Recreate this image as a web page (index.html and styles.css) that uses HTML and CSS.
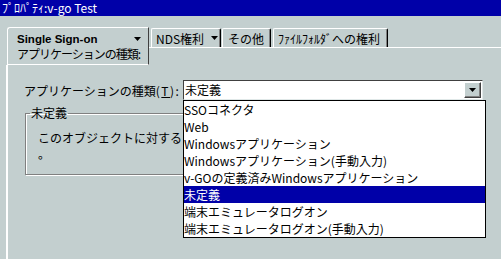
FILE: index.html
```html
<!DOCTYPE html>
<html lang="ja">
<head>
    <meta charset="UTF-8">
    <title>ﾌﾟﾛﾊﾟﾃｨ:v-go Test</title>
    <link rel="stylesheet" href="styles.css">
</head>
<body>
    <div class="titlebar">ﾌﾟﾛﾊﾟﾃｨ:v-go Test</div>

    <!-- Tabs -->
    <div class="tabstrip">
        <div class="tab-active">
            <div class="tab-head">
                <span class="tab-title">Single Sign-on</span>
                <svg class="arrow" width="7" height="4" viewBox="0 0 7 4"><polygon points="0,0 7,0 3.5,4" fill="#000"/></svg>
            </div>
            <div class="tab-sub">アプリケーションの種類:</div>
        </div>
        <div class="tab-row">
            <div class="tab tab-nds">NDS権利
                <svg class="arrow" width="7" height="4" viewBox="0 0 7 4"><polygon points="0,0 7,0 3.5,4" fill="#000"/></svg>
            </div>
            <div class="tab tab-other">その他</div>
            <div class="tab tab-files">ﾌｧｲﾙﾌｫﾙﾀﾞへの権利</div>
        </div>
    </div>

    <!-- Page -->
    <div class="panel">
        <div class="field-row">
            <label class="field-label">アプリケーションの種類<span class="mnemonic">(<u>T</u>)</span>:</label>
            <div class="combo">
                <div class="combo-box">
                    <span class="combo-value">未定義</span>
                    <span class="combo-btn">
                        <svg width="7" height="4" viewBox="0 0 7 4"><polygon points="0,0 7,0 3.5,4" fill="#000"/></svg>
                    </span>
                </div>
                <ul class="combo-list">
                    <li>SSOコネクタ</li>
                    <li>Web</li>
                    <li>Windowsアプリケーション</li>
                    <li>Windowsアプリケーション(手動入力)</li>
                    <li>v-GOの定義済みWindowsアプリケーション</li>
                    <li class="selected">未定義</li>
                    <li>端末エミュレータログオン</li>
                    <li>端末エミュレータログオン(手動入力)</li>
                </ul>
            </div>
        </div>

        <fieldset class="group">
            <legend>未定義</legend>
            <p>このオブジェクトに対する<br>。</p>
        </fieldset>
    </div>
</body>
</html>
```

FILE: styles.css
```css
* {
    box-sizing: border-box;
    margin: 0;
    padding: 0;
}

body {
    font-family: "Noto Sans CJK JP", sans-serif;
    font-size: 12px;
    color: #000;
    background-color: #c3cfcf;
    width: 501px;
    height: 259px;
    overflow: hidden;
}

.titlebar {
    height: 16px;
    line-height: 16px;
    padding-left: 2px;
    background-color: #0000a8;
    color: #fff;
}

/* Tabs */
.tabstrip {
    display: flex;
    align-items: flex-start;
    margin-top: 11px;
    padding-left: 7px;
}

.tab-active {
    width: 142px;
    height: 38px;
    border: 1px solid #fff;
    border-right-color: #404040;
    border-radius: 3px 0 0 0;
    padding: 3px 0 0 9px;
}

.tab-head {
    display: flex;
    justify-content: space-between;
    align-items: center;
    height: 15px;
    padding-right: 7px;
}

.tab-title {
    font-family: "Liberation Sans", Arial, sans-serif;
    font-weight: bold;
    font-size: 11.5px;
}

.tab-sub {
    line-height: 16px;
    white-space: nowrap;
    letter-spacing: -1px;
}

.tab-row {
    flex: 1;
    display: flex;
    height: 21px;
    padding-left: 2px;
    border-bottom: 1px solid #fff;
}

.tab {
    display: flex;
    align-items: center;
    margin-top: 1px;
    height: 19px;
    padding-left: 4px;
    border-top: 1px solid #fff;
    border-left: 1px solid #fff;
    border-right: 1px solid #000;
    border-radius: 2px 2px 0 0;
    box-shadow: inset -1px 0 #808080;
}

.tab-nds {
    width: 70px;
}

.tab-nds .arrow {
    margin-left: 7px;
}

.tab-other {
    width: 49px;
    margin-left: 1px;
    padding-left: 5px;
}

.tab-files {
    width: 115px;
    margin-left: 2px;
}

/* Page */
.panel {
    margin-left: 6px;
    height: 194px;
    border-left: 2px solid #fff;
    padding: 15px 0 0 16px;
}

.field-row {
    display: flex;
    align-items: center;
    height: 20px;
}

.field-label {
    width: 159px;
    white-space: nowrap;
}

.mnemonic {
    letter-spacing: 1.5px;
}

.combo {
    position: relative;
    width: 300px;
}

.combo-box {
    display: flex;
    justify-content: space-between;
    align-items: center;
    height: 20px;
    padding: 1px;
    background-color: #fff;
    border-top: 1px solid #404040;
    border-left: 1px solid #404040;
    border-right: 1px solid #e0e8e8;
    border-bottom: 1px solid #e0e8e8;
}

.combo-value {
    line-height: 16px;
}

.combo-btn {
    display: flex;
    justify-content: center;
    align-items: center;
    width: 17px;
    height: 16px;
    background-color: #c3cfcf;
    border-top: 1px solid #fff;
    border-left: 1px solid #fff;
    border-right: 1px solid #404040;
    border-bottom: 1px solid #404040;
    box-shadow: inset -1px -1px #808080;
}

.combo-list {
    position: absolute;
    left: 0;
    top: 20px;
    width: 303px;
    background-color: #fff;
    border: 1px solid #000;
    list-style: none;
    z-index: 10;
}

.combo-list li {
    height: 17px;
    line-height: 17px;
    white-space: nowrap;
}

.combo-list li.selected {
    background-color: #0000a8;
    color: #fff;
}

/* Group box */
.group {
    width: 440px;
    margin: 5px 0 0 1px;
    padding: 0 0 12px 0;
    border: 1px solid #808080;
    box-shadow: inset 1px 1px #fff, 1px 1px #fff;
}

.group legend {
    margin-left: 4px;
    padding: 0 1px;
    line-height: 16px;
}

.group p {
    padding: 9px 0 0 12px;
    line-height: 16px;
}
```
